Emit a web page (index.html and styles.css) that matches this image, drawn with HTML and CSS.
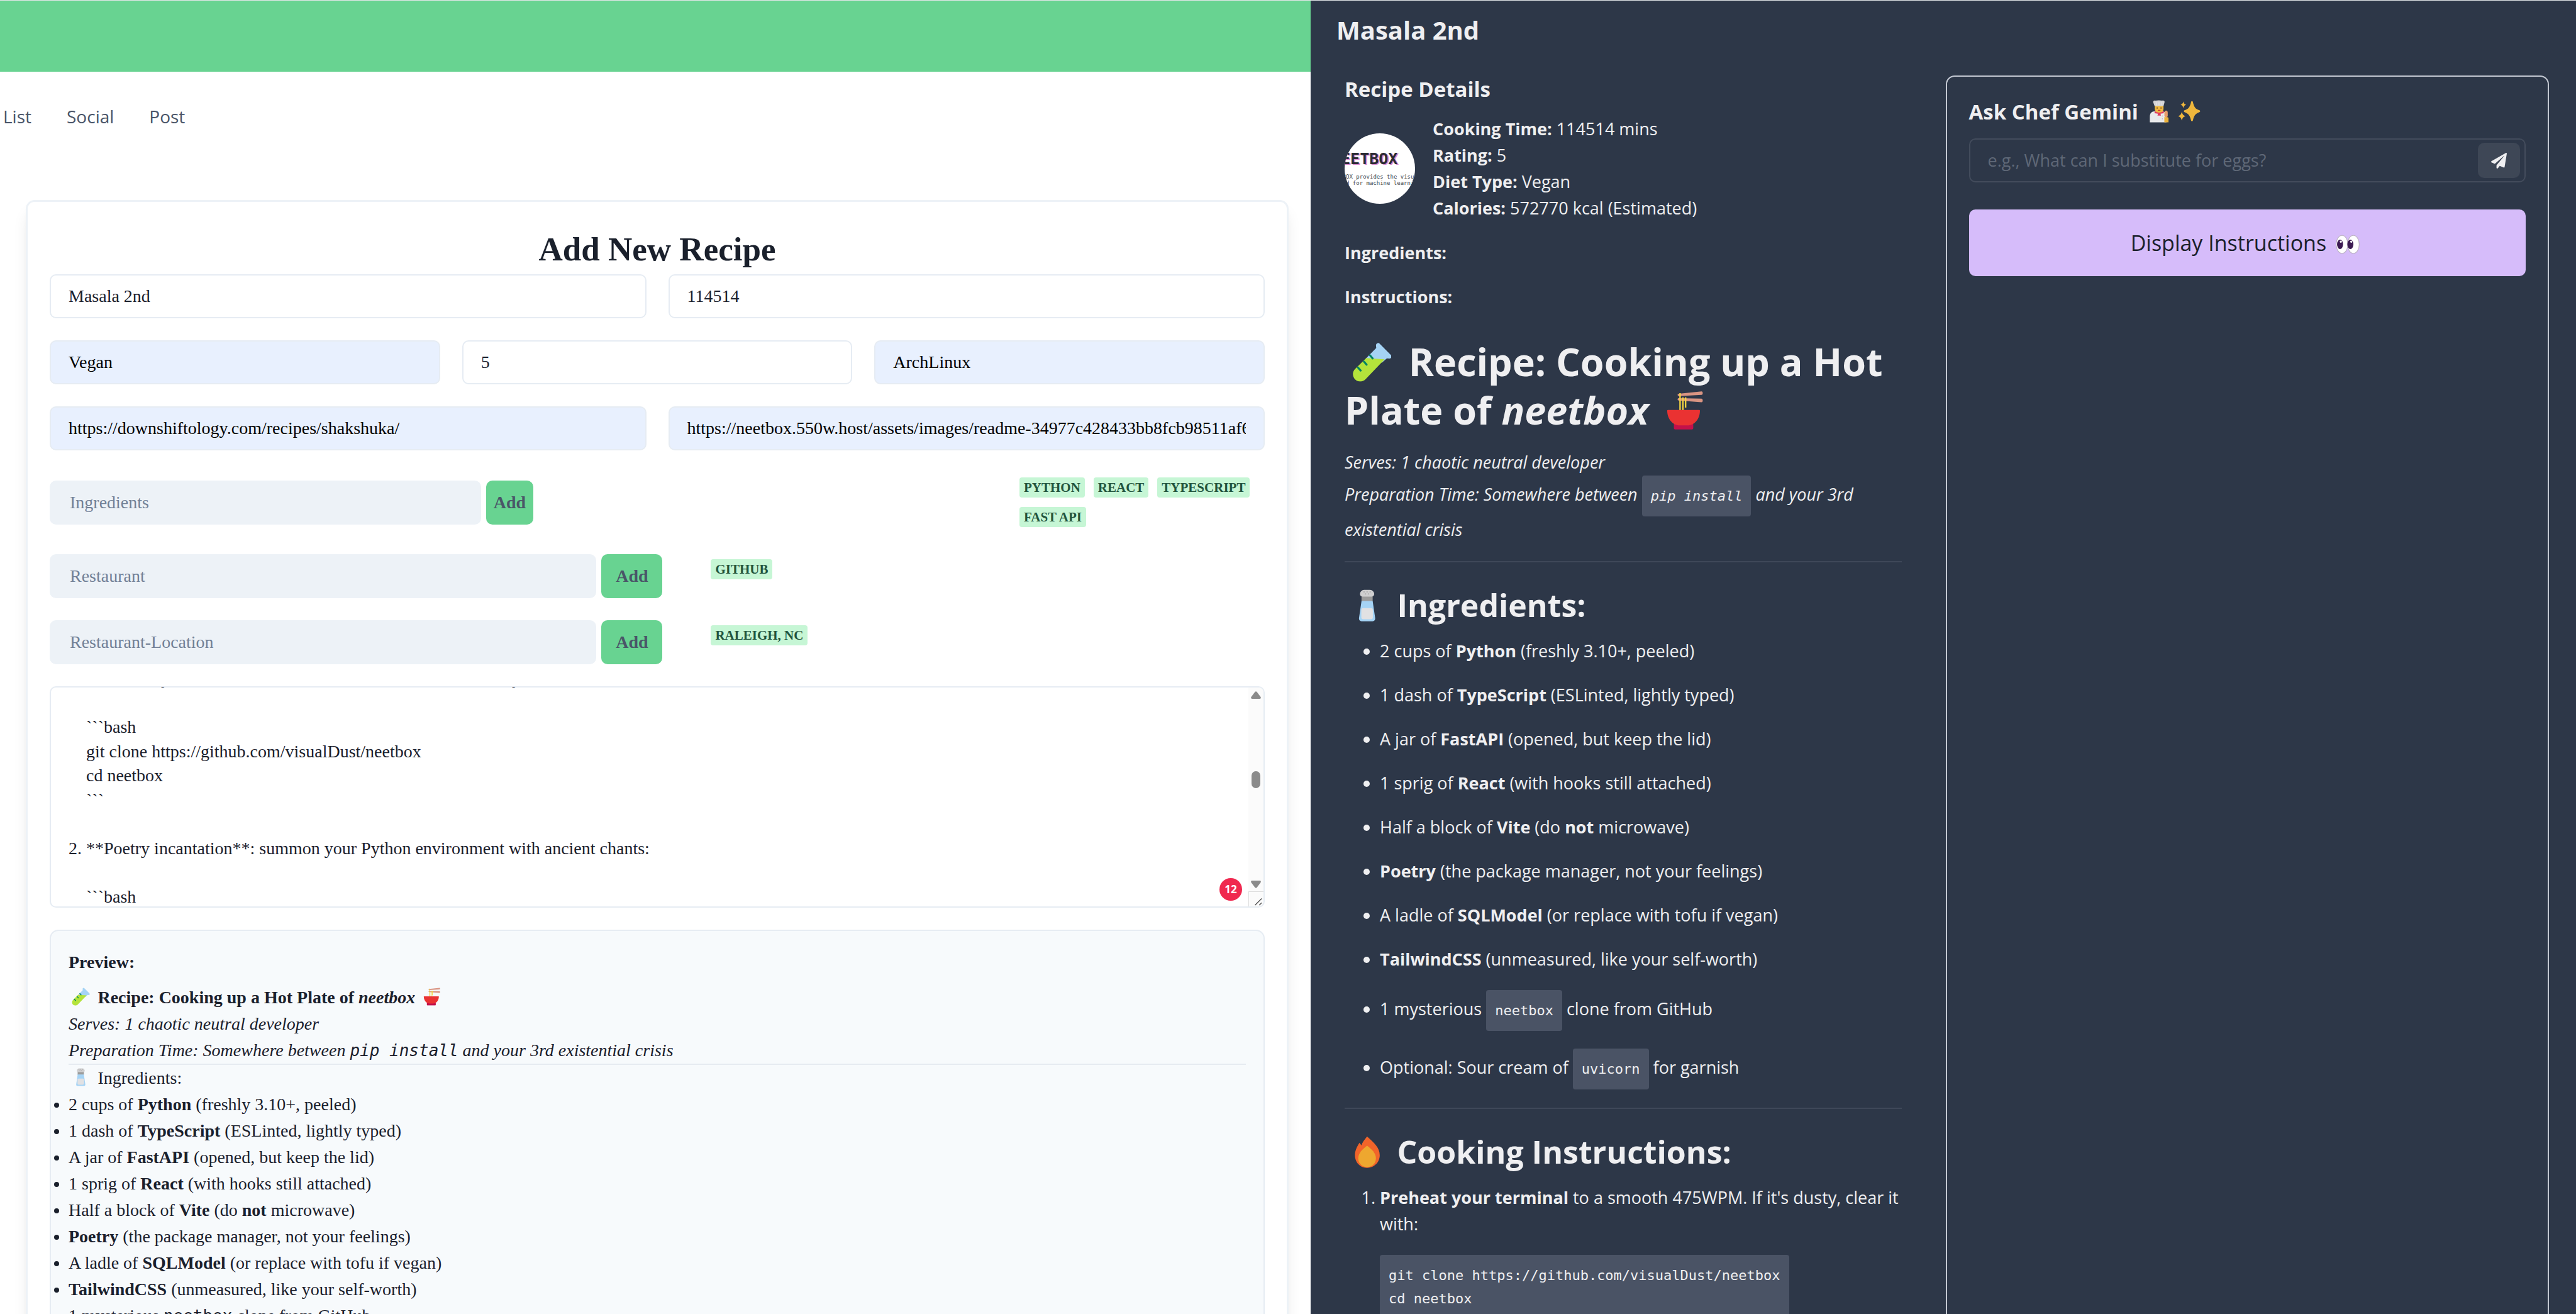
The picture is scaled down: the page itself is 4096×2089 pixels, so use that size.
FILE: index.html
```html
<!DOCTYPE html>
<html lang="en">
<head>
<meta charset="utf-8">
<title>Add New Recipe</title>
<link rel="stylesheet" href="styles.css">
</head>
<body>
<svg class="sprite" aria-hidden="true">
  <symbol id="tube" viewBox="0 0 32 32">
    <path fill="#a5d3f5" d="M19.300 2.500a1.700 1.700 0 0 1 2.900-1.300l9.200 9.200a1.700 1.700 0 0 1-1.300 2.900l-2-.2-4 3.500-13-3.300 8.400-8.600z"/>
    <path fill="#b4e33b" d="M11.400 12.900 26.300 13.900 10.800 30a5.900 5.900 0 0 1-8.500-8.200z"/>
    <path stroke="#008463" stroke-width="1.600" stroke-linecap="round" d="M14.400 10.600l2.200 2.500M9.500 15.700l2.200 2.500M4.700 20.500l2.200 2.500"/>
  </symbol>
  <symbol id="noodles" viewBox="0 0 32 32">
    <path fill="#d99482" d="M10.300 2.500 28.800.6q1-.1 1 1.400t-1 1.400L10.300 4.400q-.9 0-.9-.9t.9-1zM10.300 6.100l18.500.4q1 .1 1 1.500t-1 1.400L10.300 8q-.9 0-.9-.9t.9-1z"/>
    <path stroke="#f5d442" stroke-width="1.200" d="M11.400 2v14M13.700 5.500v10.500M15.900 5.500v8.300"/>
    <path fill="#c3114a" d="M6.400 27h15.700v3.400q0 1.100-1.100 1.100H7.500q-1.100 0-1.100-1.100z"/>
    <path fill="#ea3232" d="M1 16.200q0-.6.600-.6h25.300q.6 0 .6.600C27.500 23 23 28.200 17.500 28.200H11C5.500 28.200 1 23 1 16.200z"/>
  </symbol>
  <symbol id="salt" viewBox="0 0 32 32">
    <path fill="#9b9b9b" d="M10.500 6h11v6h-11z"/>
    <path fill="#a5d3f5" d="M10.500 11.500h11l2.500 17a2.600 2.600 0 0 1-2.600 3H10.600a2.600 2.600 0 0 1-2.600-3z"/>
    <rect fill="#e1e1e3" x="10.300" y="18.500" width="11.400" height="11" rx="2"/>
    <path fill="#cfcfd0" d="M9 4.500C9 2.500 11 .5 13 .5h6c2 0 4 2 4 4s-1.500 2.700-3 2.700h-8c-1.500 0-3-.7-3-2.700z"/>
    <path fill="#9b9b9b" d="M12.500 2h1v1h-1zM15.500 2h1v1h-1zM18.500 2h1v1h-1zM14 4h1v1h-1zM17 4h1v1h-1z"/>
  </symbol>
  <symbol id="flame" viewBox="0 0 32 32">
    <path fill="#f1642a" d="M16 .5c-2.500 3.200-4.800 6-5.600 8.800L8.500 6.700C6 10.500 4 14.500 4 19c0 7.500 5.500 12.500 12 12.500S28.500 26.500 28.500 19c0-7.500-5.500-12-12.500-18.500z"/>
    <path fill="#eea72f" d="M16 9.700c-4.500 3.300-8.700 7.300-8.700 12.300 0 5.500 4.200 8.700 8.700 8.700s8.700-3.200 8.700-8.700c0-5-4.200-9-8.700-12.300z"/>
  </symbol>
  <symbol id="chef" viewBox="0 0 32 32">
    <path fill="#e9e9eb" d="M3 31.500v-8c0-5 3-7.500 6.500-7.500h11c3.500 0 6 2.500 6 7v8.500z"/>
    <path fill="#ecb23b" d="M23.500 24.200h4.200q1.700 0 1.700 2v5.300h-5.900z"/>
    <path fill="#e59c6b" d="M23.600 17.500c0-3.500 4.700-3.500 4.700 0v5.200q0 1.500-2.300 1.500t-2.400-1.500z"/>
    <path fill="#f0b93f" d="M10 8h12.300v4.500c0 4-2.800 6-6.100 6s-6.200-2-6.200-6z"/>
    <path fill="#d4d4d6" d="M9.800 8.700 7.700 3.200C7.500 1 9.500.3 11 .9c3-.7 6.500-.7 9.500 0 1.700-.6 3.700.3 3.300 2.300l-1.500 5.500z"/>
    <path fill="#e9e9eb" d="M11.500 3h.9v4.500h-.9zM15.500 3h.9v4.500h-.9zM19.500 3h.9v4.500h-.9z"/>
    <path fill="#e23a5e" d="M9.800 15.500q6.200 4.500 12.800 0l.2 3.200-4.800.6.800 2.700h-5l.7-2.700-4.800-.6z"/>
    <path fill="#5f3420" d="M12.500 10.700h1.700v1.400h-1.700zM18 10.700h1.700v1.400H18z"/>
    <path fill="#c4392f" d="M14.300 14h3.700v1.200h-3.700z"/>
    <path fill="#a9a9b0" d="M20.200 22h1v1h-1zM20.200 26h1v1h-1z"/>
  </symbol>
  <symbol id="sparkles" viewBox="0 0 32 32">
    <path fill="#eeb63c" d="M19.900 1.500q1 0 1.300 1.300c1.600 7 3.500 9.800 9.300 11.700q2 1.200 0 2.600c-5.800 2-7.700 4.900-9.300 11.700q-.3 1.300-1.300 1.300t-1.300-1.300c-1.600-6.800-3.500-9.700-9.300-11.700q-2-1.400 0-2.600c5.800-1.900 7.700-4.700 9.300-11.700q.3-1.300 1.300-1.300zM7.700 2c.8 3 1.600 4 4 4.700-2.400.8-3.200 1.900-4 4.700-.8-2.800-1.600-3.900-4-4.700 2.400-.7 3.200-1.700 4-4.700zM5.500 16.500c.9 3.800 2 5.300 5.200 6.300-3.200 1-4.300 2.500-5.200 6.300-.9-3.800-2-5.300-5.200-6.300 3.200-1 4.300-2.500 5.200-6.300z"/>
  </symbol>
  <symbol id="eyes" viewBox="0 0 40 32">
    <g stroke="#bdb4c4" stroke-width="1.200" fill="#fff"><ellipse cx="10.500" cy="16" rx="9.800" ry="15"/><ellipse cx="29.500" cy="16" rx="9.800" ry="15"/></g>
    <g fill="#3b1a52"><ellipse cx="7.200" cy="16" rx="5" ry="7.800"/><ellipse cx="24.500" cy="16" rx="5" ry="7.800"/></g>
    <g fill="#fff"><circle cx="8.500" cy="11.500" r="1.800"/><circle cx="26" cy="11.500" r="1.800"/></g>
  </symbol>
</svg>

<div class="app">
  <div class="page">
    <header class="banner"></header>
    <nav class="tabs">
      <a href="#list">List</a>
      <a href="#social">Social</a>
      <a href="#post">Post</a>
    </nav>
    <main class="card">
      <h1 class="card-title">Add New Recipe</h1>
      <form class="form">
        <div class="row two">
          <input class="field" type="text" aria-label="Recipe name" value="Masala 2nd">
          <input class="field" type="text" aria-label="Cooking time" value="114514">
        </div>
        <div class="row three">
          <input class="field autofill" type="text" aria-label="Diet type" value="Vegan">
          <input class="field" type="text" aria-label="Rating" value="5">
          <input class="field autofill" type="text" aria-label="Cuisine" value="ArchLinux">
        </div>
        <div class="row two">
          <input class="field autofill" type="text" aria-label="Recipe link" value="https://downshiftology.com/recipes/shakshuka/">
          <input class="field autofill" type="text" aria-label="Image link" value="https://neetbox.550w.host/assets/images/readme-34977c428433bb8fcb98511af62d5e.png">
        </div>
        <div class="row ingredients">
          <input class="field filled" type="text" aria-label="Ingredients" placeholder="Ingredients">
          <button class="add" type="button">Add</button>
          <div class="tags">
            <span class="tag">Python</span><span class="tag">React</span><span class="tag">TypeScript</span><span class="tag">Fast API</span>
          </div>
        </div>
        <div class="row place">
          <input class="field filled" type="text" aria-label="Restaurant" placeholder="Restaurant">
          <button class="add" type="button">Add</button>
          <div class="tags"><span class="tag">GitHub</span></div>
        </div>
        <div class="row place">
          <input class="field filled" type="text" aria-label="Restaurant location" placeholder="Restaurant-Location">
          <button class="add" type="button">Add</button>
          <div class="tags"><span class="tag">Raleigh, NC</span></div>
        </div>
        <div class="notes">
          <textarea class="notes-text" id="notes" aria-label="Instructions" spellcheck="false">1. **Preheat your terminal** to a smooth 475WPM. If it's dusty, clear it with:

    ```bash
    git clone https://github.com/visualDust/neetbox
    cd neetbox
    ```

2. **Poetry incantation**: summon your Python environment with ancient chants:

    ```bash
    poetry install
    poetry shell
    ```
</textarea>
          <span class="notes-count">12</span>
          <div class="scroll" aria-hidden="true">
            <svg class="arrow" viewBox="0 0 16 12"><path d="M6.500 1q1.500-1.600 3 0l6 8q1.200 3-1.500 3H2q-2.700 0-1.500-3z"/></svg>
            <span class="thumb"></span>
            <svg class="arrow" viewBox="0 0 16 12"><path d="M6.500 11q1.500 1.600 3 0l6-8q1.200-3-1.500-3H2Q-.7 0 .5 3z"/></svg>
            <svg class="grip" viewBox="0 0 24 24"><path d="M10 22 21 11M17 22l4-4" stroke="#555" stroke-width="1.500"/></svg>
          </div>
        </div>
        <section class="preview">
          <p class="preview-label"><b>Preview:</b></p>
          <p><b><svg class="emoji" role="img" aria-label="test tube"><use href="#tube"/></svg> Recipe: Cooking up a Hot Plate of <i>neetbox</i> <svg class="emoji" role="img" aria-label="noodles"><use href="#noodles"/></svg></b></p>
          <p><i>Serves: 1 chaotic neutral developer</i></p>
          <p><i>Preparation Time: Somewhere between <code>pip install</code> and your 3rd existential crisis</i></p>
          <hr>
          <p><svg class="emoji" role="img" aria-label="salt"><use href="#salt"/></svg> Ingredients:</p>
          <ul>
            <li>2 cups of <b>Python</b> (freshly 3.10+, peeled)</li>
            <li>1 dash of <b>TypeScript</b> (ESLinted, lightly typed)</li>
            <li>A jar of <b>FastAPI</b> (opened, but keep the lid)</li>
            <li>1 sprig of <b>React</b> (with hooks still attached)</li>
            <li>Half a block of <b>Vite</b> (do <b>not</b> microwave)</li>
            <li><b>Poetry</b> (the package manager, not your feelings)</li>
            <li>A ladle of <b>SQLModel</b> (or replace with tofu if vegan)</li>
            <li><b>TailwindCSS</b> (unmeasured, like your self-worth)</li>
            <li>1 mysterious <code>neetbox</code> clone from GitHub</li>
          </ul>
        </section>
      </form>
    </main>
  </div>

  <aside class="drawer">
    <h2 class="drawer-title">Masala 2nd</h2>
    <div class="drawer-body">
      <section class="details">
        <h3 class="details-title">Recipe Details</h3>
        <div class="summary">
          <svg class="avatar" viewBox="0 0 112 112" role="img" aria-label="Neetbox">
            <rect width="112" height="112" fill="#fff"/>
            <text class="logo-shadow" x="-19" y="50">NEETBOX</text>
            <text class="logo" x="-21" y="49">NEETBOX</text>
            <text class="motto" x="-25" y="72">NEETBOX provides the visualization</text>
            <text class="motto" x="2" y="82">d for machine learning</text>
          </svg>
          <div>
            <p><b>Cooking Time:</b> 114514 mins</p>
            <p><b>Rating:</b> 5</p>
            <p><b>Diet Type:</b> Vegan</p>
            <p><b>Calories:</b> 572770 kcal (Estimated)</p>
          </div>
        </div>
        <p class="label"><b>Ingredients:</b></p>
        <p class="label"><b>Instructions:</b></p>

        <article class="markdown">
          <h1><svg class="emoji" role="img" aria-label="test tube"><use href="#tube"/></svg> Recipe: Cooking up a Hot Plate of <em>neetbox</em> <svg class="emoji" role="img" aria-label="noodles"><use href="#noodles"/></svg></h1>
          <p><em>Serves: 1 chaotic neutral developer</em><br><em>Preparation Time: Somewhere between <code>pip install</code> and your 3rd existential crisis</em></p>
          <hr>
          <h2><svg class="emoji" role="img" aria-label="salt"><use href="#salt"/></svg> Ingredients:</h2>
          <ul>
            <li>2 cups of <b>Python</b> (freshly 3.10+, peeled)</li>
            <li>1 dash of <b>TypeScript</b> (ESLinted, lightly typed)</li>
            <li>A jar of <b>FastAPI</b> (opened, but keep the lid)</li>
            <li>1 sprig of <b>React</b> (with hooks still attached)</li>
            <li>Half a block of <b>Vite</b> (do <b>not</b> microwave)</li>
            <li><b>Poetry</b> (the package manager, not your feelings)</li>
            <li>A ladle of <b>SQLModel</b> (or replace with tofu if vegan)</li>
            <li><b>TailwindCSS</b> (unmeasured, like your self-worth)</li>
            <li>1 mysterious <code>neetbox</code> clone from GitHub</li>
            <li>Optional: Sour cream of <code>uvicorn</code> for garnish</li>
          </ul>
          <hr>
          <h2><svg class="emoji" role="img" aria-label="fire"><use href="#flame"/></svg> Cooking Instructions:</h2>
          <ol>
            <li><b>Preheat your terminal</b> to a smooth 475WPM. If it's dusty, clear it with:
              <pre><code>git clone https://github.com/visualDust/neetbox
cd neetbox</code></pre>
            </li>
          </ol>
        </article>
      </section>

      <section class="chef">
        <h3 class="chef-title">Ask Chef Gemini <svg class="emoji" role="img" aria-label="chef"><use href="#chef"/></svg><svg class="emoji" role="img" aria-label="sparkles"><use href="#sparkles"/></svg></h3>
        <div class="ask">
          <input class="ask-input" type="text" aria-label="Question for the chef" placeholder="e.g., What can I substitute for eggs?">
          <button class="send" type="button" aria-label="Send"><svg viewBox="0 0 512 512"><path d="M476 3.200 12.500 270.600c-18.100 10.400-15.800 35.600 2.200 43.200L121 358.400l287.300-253.200c5.500-4.900 13.300 2.600 8.600 8.300L176 407v80.500c0 23.600 28.500 32.900 42.500 15.800L282 426l124.600 52.200c14.200 6 30.400-2.900 33-18.200l72-432C515 7.800 493.300-6.800 476 3.200z"/></svg></button>
        </div>
        <button class="display" type="button">Display Instructions <svg class="emoji" role="img" aria-label="eyes"><use href="#eyes"/></svg></button>
      </section>
    </div>
  </aside>
</div>
<script>
  document.getElementById('notes').scrollTop = 47;
</script>
</body>
</html>
```
FILE: styles.css
```css
* { box-sizing: border-box; margin: 0; padding: 0; }

body {
  height: 100vh;
  overflow: hidden;
  border-top: 1px solid #e4e7ea;
  background: #fff;
  color: #1a202c;
  font: 27px/42px "Open Sans", "Noto Sans", sans-serif;
}

.sprite { display: none; }

.emoji {
  width: 1.03em;
  height: 1.03em;
  margin: 0 0.19em;
  vertical-align: -0.14em;
}

code { font-family: "DejaVu Sans Mono", "Liberation Mono", monospace; }

.app {
  display: grid;
  grid-template-columns: 2084fr 2012fr;
  height: 100%;
}

/* Left: recipe form */
.page { overflow: hidden; }

.banner { height: 113px; background: #68d391; }

.tabs {
  display: flex;
  gap: 56px;
  padding: 50px 5px 112px;
  font-size: 28px;
}

.tabs a { color: #4a5568; font-weight: 500; text-decoration: none; }

.card {
  margin: 0 35px 0 41px;
  padding: 35px;
  border: 3px solid #edf2f7;
  border-radius: 14px;
  box-shadow: 0 18px 26px -5px rgba(0, 0, 0, 0.1), 0 7px 10px -4px rgba(0, 0, 0, 0.05);
  font-family: "Liberation Serif", "Times New Roman", serif;
  font-size: 28px;
}

.card-title { font-size: 53px; line-height: 80px; text-align: center; }

.form { display: grid; gap: 35px; }

.row { display: grid; align-items: center; }
.two { grid-template-columns: 1fr 1fr; gap: 35px; }
.three { grid-template-columns: 1fr 1fr 1fr; gap: 35px; }
.ingredients { grid-template-columns: 35.5% 75px 1fr; gap: 8px; }
.place { grid-template-columns: 45% 97px 1fr; gap: 8px; }

.field {
  width: 100%;
  height: 70px;
  padding: 0 28px;
  border: 2px solid #e6ecf3;
  border-radius: 10px;
  background: #fff;
  color: #1a202c;
  font: inherit;
}

.autofill { background: #e8f0fe; color: #000; }
.filled { padding: 0 30px; border-color: #edf2f7; background: #edf2f7; }
.filled::placeholder { color: #718096; opacity: 1; }

.add {
  height: 70px;
  border: 0;
  border-radius: 10px;
  background: #68d391;
  color: #4a5568;
  font: inherit;
  font-weight: 700;
}

.tags { display: flex; flex-wrap: wrap; gap: 15px 14px; }
.ingredients .tags { justify-self: end; width: 390px; padding: 8px 0; }
.place .tags { align-self: start; padding: 8px 0 0 69px; }

.tag {
  padding: 0 7px;
  border-radius: 4px;
  background: #c6f6d5;
  color: #22543d;
  font-size: 21px;
  font-weight: 700;
  line-height: 32px;
  text-transform: uppercase;
}

.notes { position: relative; height: 352px; }

.notes-text {
  display: block;
  width: 100%;
  height: 100%;
  padding: 14px 54px 14px 28px;
  overflow: hidden;
  resize: none;
  border: 2px solid #e6ecf3;
  border-radius: 10px;
  background: #fff;
  color: #1a202c;
  font: inherit;
  line-height: 1.375;
}

.notes-count {
  position: absolute;
  right: 36px;
  bottom: 11px;
  width: 36px;
  border-radius: 50%;
  background: #f0284f;
  color: #fff;
  font: 700 17px/36px "Open Sans", sans-serif;
  text-align: center;
}

.scroll {
  position: absolute;
  top: 2px;
  right: 2px;
  bottom: 2px;
  display: flex;
  flex-direction: column;
  align-items: center;
  width: 24px;
  padding-top: 6px;
  border-radius: 0 8px 8px 0;
  background: #fbfbfb;
}

.arrow { width: 16px; height: 12px; fill: #8b8b8b; }
.thumb { width: 14px; height: 27px; margin: 115px 0 147px; border-radius: 7px; background: #8b8b8b; }
.grip { width: 24px; height: 24px; margin-top: auto; border-top: 1px solid #ddd; border-left: 1px solid #ddd; }

.preview {
  padding: 29px 28px;
  border: 2px solid #e6ecf3;
  border-radius: 14px;
  background: #f7fafc;
}

.preview-label { margin-bottom: 14px; }
.preview code { font-size: 26px; line-height: 1; }
.preview hr { height: 2px; border: 0; background: #e6ebf1; }

/* Right: recipe drawer */
.drawer {
  overflow: hidden;
  background: #2d3748;
  color: #efeff1;
}

.drawer-title { padding: 22px 41px 47px; font-size: 40px; line-height: 50px; }

.drawer-body {
  display: grid;
  grid-template-columns: 914fr 960fr;
  gap: 56px;
  height: 100%;
  padding: 0 43px 0 40px;
}

.details { padding: 0 14px; }
.details-title { margin-bottom: 20px; font-size: 33px; line-height: 44px; }

.summary { display: flex; align-items: center; gap: 28px; margin-bottom: 29px; }
.avatar { width: 112px; height: 112px; border-radius: 50%; }
.logo, .logo-shadow { font: 700 25px "DejaVu Sans Mono", monospace; fill: #2b2b33; }
.logo-shadow { fill: #d98ad0; }
.motto { font: 9px "DejaVu Sans Mono", monospace; fill: #444; }

.label { margin-bottom: 28px; }

.markdown h1 { margin: 43px 0 24px; font-size: 61px; line-height: 77px; }
.markdown h2 { margin-bottom: 20px; font-size: 50px; line-height: 63px; }
.markdown hr { height: 2px; margin: 29px 0 37px; border: 0; background: #3f4859; }
.markdown ul, .markdown ol { padding-left: 56px; }
.markdown li + li { margin-top: 28px; }

.markdown code {
  display: inline-block;
  padding: 14px;
  border-radius: 4px;
  background: #4a5365;
  font-size: 22px;
  line-height: 37px;
}

.markdown pre { margin-top: 28px; }

.chef {
  padding: 35px;
  border: 2px solid #c3c8d2;
  border-radius: 14px;
}

.chef-title { margin-bottom: 21px; font-size: 33px; line-height: 42px; }

.ask {
  display: flex;
  align-items: center;
  height: 70px;
  margin-bottom: 43px;
  padding-right: 7px;
  border: 2px solid #434c5c;
  border-radius: 10px;
}

.ask-input {
  flex: 1;
  padding: 0 28px;
  border: 0;
  background: none;
  color: inherit;
  font: inherit;
}

.ask-input::placeholder { color: #5f6877; opacity: 1; }

.send {
  display: grid;
  place-items: center;
  width: 67px;
  height: 56px;
  border: 0;
  border-radius: 10px;
  background: #3e4756;
}

.send svg { width: 25px; height: 25px; fill: #efeff1; }

.display {
  width: 100%;
  height: 106px;
  border: 0;
  border-radius: 10px;
  background: #d6bcfa;
  color: #1a202c;
  font: 500 34px/42px "Open Sans", "Noto Sans", sans-serif;
}

.chef-title .emoji { width: 36px; height: 36px; }
.display .emoji { width: 38px; height: 31px; }
```
